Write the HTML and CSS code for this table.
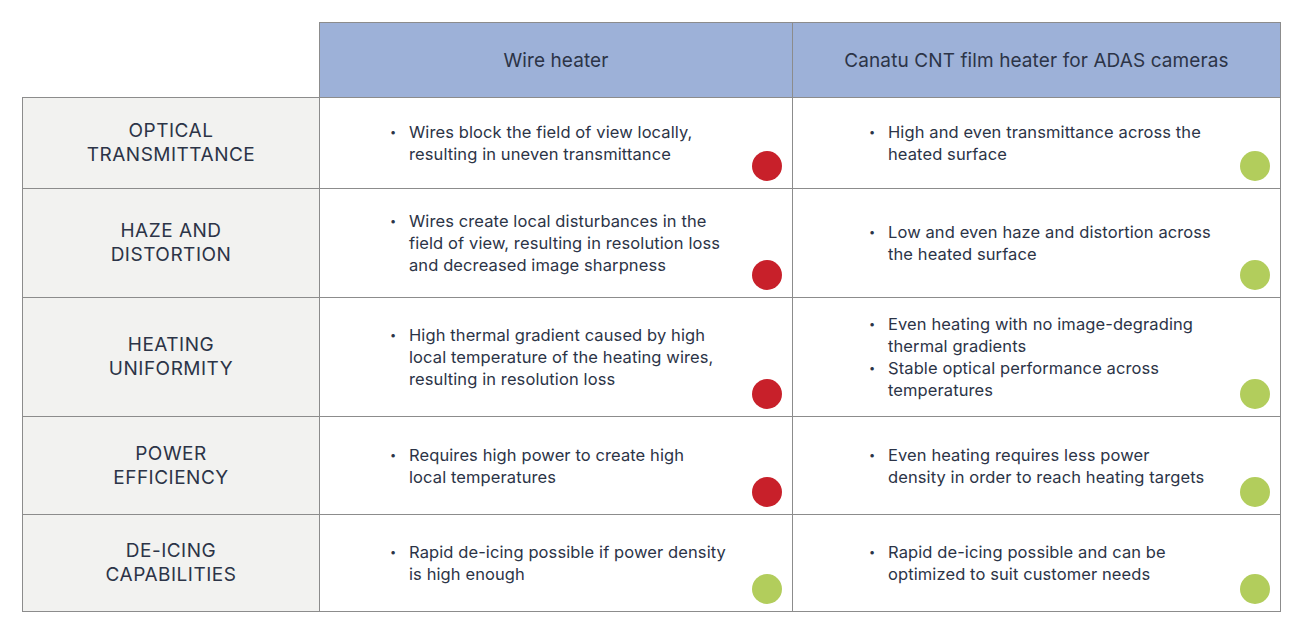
FILE: index.html
```html
<!DOCTYPE html>
<html lang="en">
<head>
<meta charset="utf-8">
<title>Wire heater vs Canatu CNT film heater</title>
<link rel="stylesheet" href="styles.css">
</head>
<body>
<table class="cmp">
  <colgroup>
    <col class="c-label">
    <col class="c-wire">
    <col class="c-cnt">
  </colgroup>
  <thead>
    <tr class="head">
      <th class="corner"></th>
      <th class="col-h">Wire heater</th>
      <th class="col-h">Canatu CNT film heater for ADAS cameras</th>
    </tr>
  </thead>
  <tbody>
    <tr class="r1">
      <th class="label">OPTICAL<br>TRANSMITTANCE</th>
      <td class="cell wire"><ul class="pts"><li><span>Wires block the field of view locally,<br>resulting in uneven transmittance</span></li></ul><span class="dot red"></span></td>
      <td class="cell cnt"><ul class="pts"><li><span>High and even transmittance across the<br>heated surface</span></li></ul><span class="dot green"></span></td>
    </tr>
    <tr class="r2">
      <th class="label">HAZE AND<br>DISTORTION</th>
      <td class="cell wire"><ul class="pts"><li><span>Wires create local disturbances in the<br>field of view, resulting in resolution loss<br>and decreased image sharpness</span></li></ul><span class="dot red"></span></td>
      <td class="cell cnt"><ul class="pts"><li><span>Low and even haze and distortion across<br>the heated surface</span></li></ul><span class="dot green"></span></td>
    </tr>
    <tr class="r3">
      <th class="label">HEATING<br>UNIFORMITY</th>
      <td class="cell wire"><ul class="pts"><li><span>High thermal gradient caused by high<br>local temperature of the heating wires,<br>resulting in resolution loss</span></li></ul><span class="dot red"></span></td>
      <td class="cell cnt"><ul class="pts"><li><span>Even heating with no image-degrading<br>thermal gradients</span></li><li><span>Stable optical performance across<br>temperatures</span></li></ul><span class="dot green"></span></td>
    </tr>
    <tr class="r4">
      <th class="label">POWER<br>EFFICIENCY</th>
      <td class="cell wire"><ul class="pts"><li><span>Requires high power to create high<br>local temperatures</span></li></ul><span class="dot red"></span></td>
      <td class="cell cnt"><ul class="pts"><li><span>Even heating requires less power<br>density in order to reach heating targets</span></li></ul><span class="dot green"></span></td>
    </tr>
    <tr class="r5">
      <th class="label">DE-ICING<br>CAPABILITIES</th>
      <td class="cell wire"><ul class="pts"><li><span>Rapid de-icing possible if power density<br>is high enough</span></li></ul><span class="dot green"></span></td>
      <td class="cell cnt"><ul class="pts"><li><span>Rapid de-icing possible and can be<br>optimized to suit customer needs</span></li></ul><span class="dot green"></span></td>
    </tr>
  </tbody>
</table>
</body>
</html>
```

FILE: styles.css
```css
html, body {
  margin: 0;
  padding: 0;
  background: #ffffff;
}

body {
  font-family: Inter, "Liberation Sans", sans-serif;
  color: #2c3447;
  padding: 22px 0 0 22px;
}

.cmp {
  border-collapse: collapse;
  table-layout: fixed;
  width: 1258px;
}

.c-label { width: 297px; }
.c-wire { width: 473px; }
.c-cnt { width: 488px; }

.cmp th,
.cmp td {
  border: 1px solid #8c8c8c;
  padding: 0;
}

.cmp .corner {
  border: none;
  background: transparent;
}

.head { height: 75px; }
.r1 { height: 91px; }
.r2 { height: 109px; }
.r3 { height: 119px; }
.r4 { height: 98px; }
.r5 { height: 97px; }

.col-h {
  background: #9db1d8;
  font-weight: 400;
  font-size: 19px;
  letter-spacing: 0.1px;
  text-align: center;
  vertical-align: middle;
}

.label {
  background: #f2f2f0;
  font-weight: 400;
  font-size: 19px;
  letter-spacing: 0.5px;
  line-height: 24px;
  text-align: center;
  vertical-align: middle;
  padding-top: 2px;
}

.cell {
  position: relative;
  vertical-align: middle;
  background: #ffffff;
  padding-top: 3px;
}

.cell.wire { padding-left: 70px; }
.cell.cnt { padding-left: 76px; }

.pts {
  list-style: none;
  margin: 0;
  padding: 0;
  font-size: 16.5px;
  line-height: 22px;
  letter-spacing: 0.1px;
}

.pts li {
  display: flex;
  gap: 14px;
}

.pts li::before {
  content: "•";
  font-size: 11px;
  line-height: 22px;
  width: 5px;
  flex: none;
}

.dot {
  position: absolute;
  right: 10px;
  bottom: 7px;
  width: 30px;
  height: 30px;
  border-radius: 50%;
}

.dot.red { background: #c8202a; }
.dot.green { background: #b2cd5c; }
```
